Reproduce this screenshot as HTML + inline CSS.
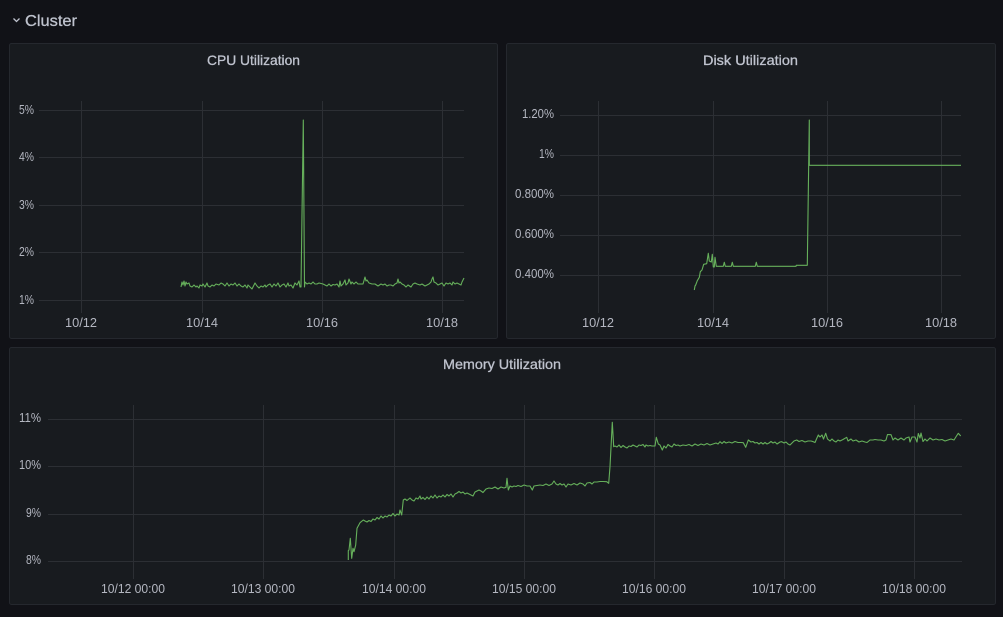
<!DOCTYPE html>
<html><head><meta charset="utf-8"><title>Cluster</title>
<style>
html,body{margin:0;padding:0;background:#111217;width:1003px;height:617px;overflow:hidden}
svg{display:block;font-family:"Liberation Sans",sans-serif}
.p{fill:#181b1f;stroke:#25282e;stroke-width:1}
.g{stroke:#2c2f34;stroke-width:1;fill:none}
.l{fill:none;stroke:#66b05b;stroke-width:1.1;stroke-linejoin:round}
.t{fill:#bfc3ce;font-size:14px;stroke:#bfc3ce;stroke-width:.3;text-anchor:middle}
.a{fill:#b4b7c1;font-size:13px}
.e{text-anchor:end}.m{text-anchor:middle}
</style></head><body>
<svg width="1003" height="617" viewBox="0 0 1003 617">
<rect width="1003" height="617" fill="#111217"/>
<polyline points="13.5,18.5 16.5,21.5 19.5,18.5" fill="none" stroke="#bfc3ce" stroke-width="1.3"/>
<text x="25" y="26" font-size="16" fill="#bfc3ce" stroke="#bfc3ce" stroke-width=".3" textLength="52" lengthAdjust="spacingAndGlyphs">Cluster</text>

<rect class="p" x="9.5" y="43.5" width="488" height="295" rx="2"/>
<rect class="p" x="506.5" y="43.5" width="489" height="295" rx="2"/>
<rect class="p" x="9.5" y="347.5" width="986" height="257" rx="2"/>

<text class="t" x="253.5" y="65" textLength="93" lengthAdjust="spacingAndGlyphs">CPU Utilization</text>
<text class="t" x="750.5" y="65" textLength="95" lengthAdjust="spacingAndGlyphs">Disk Utilization</text>
<text class="t" x="502" y="369" textLength="118" lengthAdjust="spacingAndGlyphs">Memory Utilization</text>

<!-- CPU grid -->
<path class="g" d="M39 110.5H464M39 157.5H464M39 205.5H464M39 252.5H464M39 300.5H464M81.5 101V313M202.5 101V313M322.5 101V313M442.5 101V313"/>
<g class="a">
<text x="19" y="114" textLength="15" lengthAdjust="spacingAndGlyphs">5%</text><text x="19" y="161" textLength="15" lengthAdjust="spacingAndGlyphs">4%</text><text x="19" y="209" textLength="15" lengthAdjust="spacingAndGlyphs">3%</text><text x="19" y="256" textLength="15" lengthAdjust="spacingAndGlyphs">2%</text><text x="19" y="304" textLength="15" lengthAdjust="spacingAndGlyphs">1%</text>
</g>
<g class="a m">
<text x="81" y="327" textLength="32" lengthAdjust="spacingAndGlyphs">10/12</text><text x="202" y="327" textLength="32" lengthAdjust="spacingAndGlyphs">10/14</text><text x="322" y="327" textLength="32" lengthAdjust="spacingAndGlyphs">10/16</text><text x="442" y="327" textLength="32" lengthAdjust="spacingAndGlyphs">10/18</text>
</g>
<polyline class="l" points="181,287 182,282 183,285 184,281 185,286 186,282 187,284 189,283 190,286 192,287 194,285 196,287 197,286 199,288 200,285 202,286 203,284 205,287 207,283 208,286 210,287 212,285 214,286 216,284 219,285 221,283 223,284 225,286 227,283 229,286 231,284 233,285 235,283 237,286 239,284 241,286 243,287 245,285 247,288 248,285 250,287 252,289 254,285 255,283 257,286 259,288 261,286 263,287 265,285 266,287 268,285 270,284 272,287 274,284 276,286 278,283 280,287 282,285 284,284 286,287 288,283 289,286 291,285 293,288 295,283 297,285 299,281 300,287 301,287 303.3,120 304.5,287 305,282 307,284 309,283 311,284 313,282 315,284 317,284 319,283 321,283.5 323,284 325,285 327,286 329,284 331,286 333,284.5 335,285 337,284 339,287 340,281 341,286 343,284 345,280 346,285 348,283 349,279 351,284 352,282 354,284 356,282 358,284 360,284 363,284 365,277 366,281 367,280 369,283 372,284 375,284 378,286 381,284 383,285 385,284 387,286 389,285 391,285 393,286 395,284 397,283 398,279 399,283 400,282 402,284 404,285 406,287 408,285 411,287 413,284 415,283 417,284 420,285 422,284 425,286 427,285 429,284 431,282 432,279 433,277 434,282 436,283 438,285 440,284 442,283 444,286 446,283 448,284 450,283 452,285 453,282 455,284 457,283 459,284 461,285 462,282 464,278"/>

<!-- Disk grid -->
<path class="g" d="M560 115.5H961M560 155.5H961M560 195.5H961M560 235.5H961M560 275.5H961M598.5 101V313M713.5 101V313M827.5 101V313M941.5 101V313"/>
<g class="a">
<text x="522" y="118" textLength="32" lengthAdjust="spacingAndGlyphs">1.20%</text><text x="539" y="158" textLength="15" lengthAdjust="spacingAndGlyphs">1%</text><text x="515" y="198" textLength="39" lengthAdjust="spacingAndGlyphs">0.800%</text><text x="515" y="238" textLength="39" lengthAdjust="spacingAndGlyphs">0.600%</text><text x="515" y="278" textLength="39" lengthAdjust="spacingAndGlyphs">0.400%</text>
</g>
<g class="a m">
<text x="598" y="327" textLength="32" lengthAdjust="spacingAndGlyphs">10/12</text><text x="713" y="327" textLength="32" lengthAdjust="spacingAndGlyphs">10/14</text><text x="827" y="327" textLength="32" lengthAdjust="spacingAndGlyphs">10/16</text><text x="941" y="327" textLength="32" lengthAdjust="spacingAndGlyphs">10/18</text>
</g>
<polyline class="l" points="694.3,290 695,286 695.7,285 697.3,280.7 699.3,277.3 700.3,271.7 702,270 703.7,264.3 706.7,263.7 708.3,253.3 709.3,261 711.3,262 712.3,254.3 713.3,267 714.3,267 715,257.3 716.3,266.3 723.3,266.3 724.3,262.3 725.3,266.3 731.3,266.3 732.3,262.3 733.3,266.3 755.3,266.3 756.3,262.3 757.3,266.3 796,266.3 796.3,265.3 807.3,265.3 809.3,120 809.3,165.3 961,165.3"/>

<!-- Memory grid -->
<path class="g" d="M48 419.5H962M48 466.5H962M48 514.5H962M48 561.5H962M133.5 405V579M263.5 405V579M394.5 405V579M524.5 405V579M654.5 405V579M784.5 405V579M914.5 405V579"/>
<g class="a">
<text x="19" y="422" textLength="22" lengthAdjust="spacingAndGlyphs">11%</text><text x="19" y="469" textLength="22" lengthAdjust="spacingAndGlyphs">10%</text><text x="26" y="517" textLength="15" lengthAdjust="spacingAndGlyphs">9%</text><text x="26" y="564" textLength="15" lengthAdjust="spacingAndGlyphs">8%</text>
</g>
<g class="a m">
<text x="133" y="593" textLength="64" lengthAdjust="spacingAndGlyphs">10/12 00:00</text><text x="263" y="593" textLength="64" lengthAdjust="spacingAndGlyphs">10/13 00:00</text><text x="394" y="593" textLength="64" lengthAdjust="spacingAndGlyphs">10/14 00:00</text><text x="524" y="593" textLength="64" lengthAdjust="spacingAndGlyphs">10/15 00:00</text><text x="654" y="593" textLength="64" lengthAdjust="spacingAndGlyphs">10/16 00:00</text><text x="784" y="593" textLength="64" lengthAdjust="spacingAndGlyphs">10/17 00:00</text><text x="914" y="593" textLength="64" lengthAdjust="spacingAndGlyphs">10/18 00:00</text>
</g>
<polyline class="l" points="348.3,560 348.3,550.7 349,550 350.3,538.3 351.7,558.3 353,548.3 354,551.7 355.7,545 357,528.3 360,522.7 363.3,520 365,521 367,522 369,520.5 371,521.5 373,519 375,520 377,517.5 379,519 381,516 383,518 385,516 387,517 389,515 391,516 393,513.5 395,516 397,514 399,515 400,510 401.7,515 403.3,500 405,499 407,500.5 410,498 412,500 414,501 416,498 418,499 420,496 421,499 423,497.5 425,499.5 427,497 429,499 431,496 433,498 435,495 437,498 439,496 441,497 443,495 445,497 447,494.5 449,496 451,494 453,497 455,494 457,493 459,491.5 461,493 463,492 465,494 467,493 469,494 471,495 473,496 475,492 477,491 479,490 481,491 483,492.5 486,489 489,488 492,488.5 495,487 498,489 501,487 504,488 506,487.3 507,478.3 508.3,490 510,486 512,487 514,486 516,486.5 518,485.5 521,486.5 524,485 527,486 530,486 532.3,490 534,486 537,485.5 540,485 543,485.5 546,484 549,485.5 552,484 554,481 556,484 558,485 560,483.5 562,485 564,484 566,487 568,484 571,485 574,483.5 577,485 580,483 583,484 585,486 587,483 590,482.5 592,484 594,482 597,482 600,481.5 603,481.5 606.7,481.7 608.7,483.3 610,466.7 612.3,422.3 613.7,446.7 615,446 617,447 619,445 621,447.5 623,445.5 625,447 627,448 629,446 631,446.5 633,445 635,446 637,447 639,445 641,445.5 643,444.5 645,447 646,445 648,446 650,445.5 652,446 655,446 656.3,437.3 658.3,444 660,445 662.3,450 664,446 666,448 668,444.5 670,446 672,447 674,444 676,445.5 678,445 680,446 683,445 686,445.5 689,444.5 692,446 695,444 698,445.5 701,444 704,445 707,443.5 710,445 713,444 716,443 718,444 720,441.7 722,443.5 724,441.5 726,443 729,442 732,443 735,441.5 738,442.5 741,442.5 743.3,442.7 745.7,447.3 748.3,440 751,442 753,441.5 755,443 757,442.5 759,444 761,442.5 763,444 765,442.5 767,444 769,443 771,441.5 773,443 775,442 777,444 780,442 781.7,441.7 784,443 786,442 788,444 790,445 792,443 794,441 796.7,440 799,441.5 802,440.5 805,442 808,441 811,441 813.3,441.7 815,442.5 816.5,439 818.3,435 820,437 822,435 823.5,439 825.7,433.3 827.5,439 830,441 832,439 834,441 836,442 838,440 840,441 843,439.5 846.7,437.3 848,441 851,439 853,441 856,440 859,442 862,441 865,442 867,442.5 870,440 873,440 875,439.5 878,440 881,440 884,441 886,440 887.5,434.5 891,434.7 893,440 895,438 898,440 901,438 904,440 906,438 909,437 910,442 912,437 915,437 917,442 918.3,433.5 920,438 921,433 923,441.5 925,439 927,441 930,438 933,440 936,439 939,440 942,439.5 945,441 948,440 951,439 954,440 956.5,436 958.3,433.3 960.7,436"/>
</svg>
</body></html>
